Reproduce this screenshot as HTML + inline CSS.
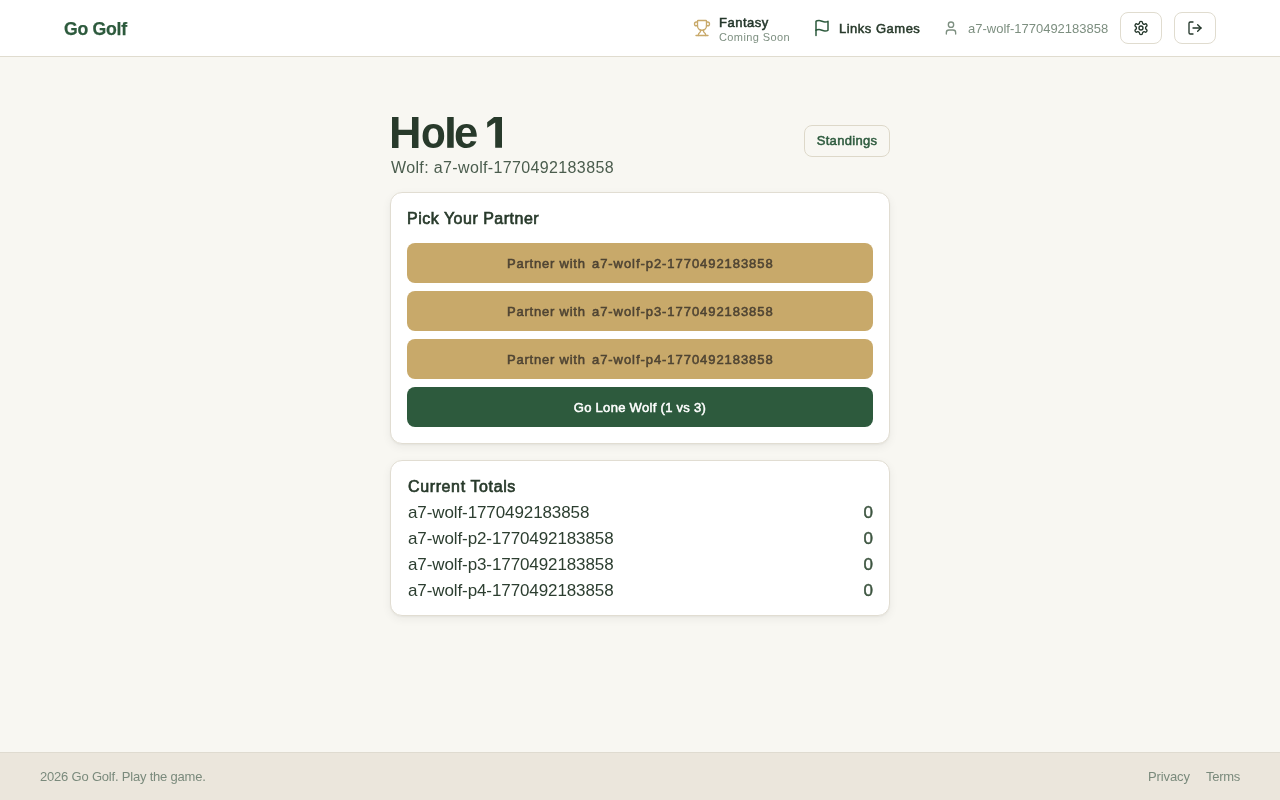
<!DOCTYPE html>
<html>
<head>
<meta charset="utf-8">
<style>
*{box-sizing:border-box;margin:0;padding:0}
.wrap{position:absolute;left:0;top:0;width:1280px;height:800px;will-change:transform}
html,body{width:1280px;height:800px;overflow:hidden}
body{font-family:"Liberation Sans",sans-serif;background:#f8f7f2;color:#1f3324;position:relative}
.hdr{position:absolute;left:0;top:0;width:1280px;height:57px;background:#fff;border-bottom:1px solid #e0dccf}
.logo{position:absolute;left:64px;top:18px;font-size:19px;font-weight:700;color:#2d5a3d;letter-spacing:-0.3px;line-height:21px;transform:scaleX(0.93);transform-origin:0 0;white-space:nowrap;-webkit-text-stroke:0.25px #2d5a3d}
.nav{position:absolute;top:0;height:56px}
.abs{position:absolute}
svg{display:block}
.ibtn{position:absolute;top:12px;width:42px;height:32px;border:1px solid #e0dccf;border-radius:8px;background:#fff}
.ibtn svg{position:absolute;left:12px;top:7px}
.main{position:absolute;left:390px;top:0;width:500px}
h1{position:absolute;left:389px;top:108px;font-size:45px;color:#283a2b;line-height:50px;white-space:nowrap}
h1 span{position:absolute;top:0;display:block}
.sub{position:absolute;left:391px;top:158px;font-size:16px;color:#4b5d4e;line-height:20px;letter-spacing:0.36px}
.stand{position:absolute;left:804px;top:125px;width:86px;height:32px;border:1px solid #ddd8c9;border-radius:8px;background:#f8f7f2;color:#2d5a3d;font-size:13px;font-weight:700;text-align:center;line-height:30px;letter-spacing:0}
.card{position:absolute;left:390px;width:500px;background:#fff;border:1px solid #e1ddd2;border-radius:12px;box-shadow:0 1px 2px rgba(40,40,20,0.05),0 3px 10px rgba(40,40,20,0.06)}
.ct{position:absolute;left:16px;font-size:16px;font-weight:400;-webkit-text-stroke:0.65px #283a2b;color:#283a2b;line-height:20px;letter-spacing:0.5px}
.pbtn{position:absolute;left:16px;width:466px;height:40px;border-radius:8px;background:#c8a96a;color:#4f4433;font-size:13px;font-weight:700;text-align:center;line-height:40px;letter-spacing:0.55px}
.pw{position:absolute;left:100px;top:1px;letter-spacing:0.78px;font-weight:400;-webkit-text-stroke:0.55px #4f4433}
.pid{position:absolute;left:185px;top:1px;letter-spacing:0.94px;font-weight:400;-webkit-text-stroke:0.55px #4f4433}
.gbtn{background:#2d5a3d;color:#fff;letter-spacing:0.3px;line-height:42px;font-weight:400;-webkit-text-stroke:0.5px #fff}
.row{position:absolute;left:17px;width:465px;height:26px;font-size:17px;line-height:20px;color:#2c3e30;letter-spacing:-0.1px}
.row span{position:absolute;right:0;top:0;color:#3d5540;letter-spacing:0;-webkit-text-stroke:0.45px #3d5540}
.ftr{position:absolute;left:0;top:752px;width:1280px;height:48px;background:#ebe6dc;border-top:1px solid #dfdbd0;color:#7a8a7c;font-size:13px}
</style>
</head>
<body><div class="wrap">
<div class="hdr">
  <div class="logo">Go Golf</div>
  <!-- Fantasy -->
  <svg class="abs" style="left:693px;top:19px" width="18" height="18" viewBox="0 0 24 24" fill="none" stroke="#c8a96a" stroke-width="1.8" stroke-linecap="round" stroke-linejoin="round"><path d="M10 14.66v1.626a2 2 0 0 1-.976 1.696A5 5 0 0 0 7 21.978"/><path d="M14 14.66v1.626a2 2 0 0 0 .976 1.696A5 5 0 0 1 17 21.978"/><path d="M18 9h1.5a1 1 0 0 0 0-5H18"/><path d="M4 22h16"/><path d="M6 9a6 6 0 0 0 12 0V3a1 1 0 0 0-1-1H7a1 1 0 0 0-1 1z"/><path d="M6 9H4.5a1 1 0 0 1 0-5H6"/></svg>
  <div class="abs" style="left:719px;top:15px;font-size:13px;font-weight:400;-webkit-text-stroke:0.5px #23362a;letter-spacing:0.5px;color:#23362a;line-height:15px">Fantasy</div>
  <div class="abs" style="left:719px;top:30px;font-size:11px;color:#7d8f80;line-height:14px;letter-spacing:0.4px">Coming Soon</div>
  <!-- Links -->
  <svg class="abs" style="left:813px;top:19px" width="18" height="18" viewBox="0 0 24 24" fill="none" stroke="#2d5a3d" stroke-width="2" stroke-linecap="round" stroke-linejoin="round"><path d="M4 15s1-1 4-1 5 2 8 2 4-1 4-1V3s-1 1-4 1-5-2-8-2-4 1-4 1z"/><line x1="4" x2="4" y1="22" y2="15"/></svg>
  <div class="abs" style="left:839px;top:21px;font-size:13px;font-weight:400;-webkit-text-stroke:0.5px #283a2b;letter-spacing:0.5px;color:#283a2b;line-height:15px">Links Games</div>
  <!-- user -->
  <svg class="abs" style="left:943px;top:20px" width="16" height="16" viewBox="0 0 24 24" fill="none" stroke="#7d8f80" stroke-width="2" stroke-linecap="round" stroke-linejoin="round"><path d="M19 21v-2a4 4 0 0 0-4-4H9a4 4 0 0 0-4 4v2"/><circle cx="12" cy="7" r="4"/></svg>
  <div class="abs" style="left:968px;top:21px;font-size:13px;color:#7d8f80;line-height:15px">a7-wolf-1770492183858</div>
  <div class="ibtn" style="left:1120px">
    <svg width="16" height="16" viewBox="0 0 24 24" fill="none" stroke="#23362a" stroke-width="2" stroke-linecap="round" stroke-linejoin="round"><path d="M12.22 2h-.44a2 2 0 0 0-2 2v.18a2 2 0 0 1-1 1.73l-.43.25a2 2 0 0 1-2 0l-.15-.08a2 2 0 0 0-2.73.73l-.22.38a2 2 0 0 0 .73 2.730l.15.1a2 2 0 0 1 1 1.72v.51a2 2 0 0 1-1 1.74l-.15.09a2 2 0 0 0-.73 2.73l.22.38a2 2 0 0 0 2.73.73l.15-.08a2 2 0 0 1 2 0l.43.25a2 2 0 0 1 1 1.73V20a2 2 0 0 0 2 2h.44a2 2 0 0 0 2-2v-.18a2 2 0 0 1 1-1.73l.43-.25a2 2 0 0 1 2 0l.15.08a2 2 0 0 0 2.73-.73l.22-.39a2 2 0 0 0-.73-2.73l-.15-.08a2 2 0 0 1-1-1.740v-.5a2 2 0 0 1 1-1.74l.15-.09a2 2 0 0 0 .73-2.73l-.22-.38a2 2 0 0 0-2.73-.73l-.15.08a2 2 0 0 1-2 0l-.43-.25a2 2 0 0 1-1-1.73V4a2 2 0 0 0-2-2z"/><circle cx="12" cy="12" r="3"/></svg>
  </div>
  <div class="ibtn" style="left:1174px">
    <svg width="16" height="16" viewBox="0 0 24 24" fill="none" stroke="#23362a" stroke-width="2" stroke-linecap="round" stroke-linejoin="round"><path d="M9 21H5a2 2 0 0 1-2-2V5a2 2 0 0 1 2-2h4"/><polyline points="16 17 21 12 16 7"/><line x1="21" x2="9" y1="12" y2="12"/></svg>
  </div>
</div>

<h1><span style="left:0">H</span><span style="left:32px;transform:scaleX(0.9);transform-origin:0 0">o</span><span style="left:65px;transform:scaleX(0.97);transform-origin:0 0">e</span></h1>
<svg class="abs" style="left:440px;top:110px" width="70" height="45" viewBox="440 110 70 45"><path d="M494 117L502 117L502 147.8L495.2 147.8L495.2 122.6L487.2 127.8L487.2 122.2Z" fill="#283a2b"/><rect x="447.2" y="117" width="6.5" height="30.8" fill="#283a2b"/></svg>
<div class="sub">Wolf: a7-wolf-1770492183858</div>
<div class="stand"><span style="display:inline-block;font-weight:400;-webkit-text-stroke:0.5px #2d5a3d;letter-spacing:0.3px">Standings</span></div>

<div class="card" style="top:192px;height:252px">
  <div class="ct" style="top:16px">Pick Your Partner</div>
  <div class="pbtn" style="top:50px"><span class="pw">Partner with</span><span class="pid">a7-wolf-p2-1770492183858</span></div>
  <div class="pbtn" style="top:98px"><span class="pw">Partner with</span><span class="pid">a7-wolf-p3-1770492183858</span></div>
  <div class="pbtn" style="top:146px"><span class="pw">Partner with</span><span class="pid">a7-wolf-p4-1770492183858</span></div>
  <div class="pbtn gbtn" style="top:194px">Go Lone Wolf (1 vs 3)</div>
</div>

<div class="card" style="top:460px;height:156px">
  <div class="ct" style="top:16px;left:17px;letter-spacing:0.62px">Current Totals</div>
  <div class="row" style="top:42px">a7-wolf-1770492183858<span>0</span></div>
  <div class="row" style="top:68px">a7-wolf-p2-1770492183858<span>0</span></div>
  <div class="row" style="top:94px">a7-wolf-p3-1770492183858<span>0</span></div>
  <div class="row" style="top:120px">a7-wolf-p4-1770492183858<span>0</span></div>
</div>

<div class="ftr">
  <div class="abs" style="left:40px;top:16px;line-height:15px;letter-spacing:-0.2px">2026 Go Golf. Play the game.</div>
  <div class="abs" style="left:1148px;top:16px;line-height:15px;letter-spacing:-0.1px">Privacy</div>
  <div class="abs" style="left:1206px;top:16px;line-height:15px;letter-spacing:-0.3px">Terms</div>
</div>
</div></body>
</html>
